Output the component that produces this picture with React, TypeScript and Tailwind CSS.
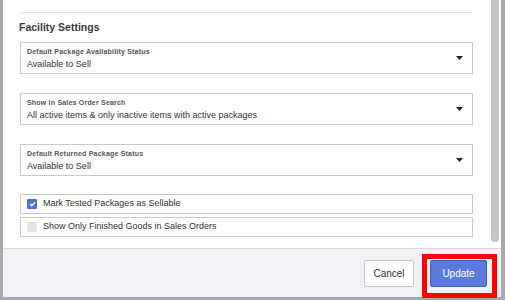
import React from 'react';

const selects = [
  { label: 'Default Package Availability Status', value: 'Available to Sell' },
  { label: 'Show in Sales Order Search', value: 'All active items & only inactive items with active packages' },
  { label: 'Default Returned Package Status', value: 'Available to Sell' },
];

function Caret() {
  return (
    <svg width="7" height="4" viewBox="0 0 7 4" className="shrink-0">
      <path d="M0 0 H7 L3.5 4 Z" fill="#222" />
    </svg>
  );
}

function SelectBox({ label, value }: { label: string; value: string }) {
  return (
    <div className="flex h-[32px] items-center border border-[#c9c9cc] bg-white pl-[6px] pr-[9px]">
      <div className="flex flex-1 flex-col">
        <span className="text-[7px] font-bold leading-[9px] tracking-[0.2px] text-[#555]">{label}</span>
        <span className="mt-[3px] text-[9px] leading-[11px] text-[#333]">{value}</span>
      </div>
      <Caret />
    </div>
  );
}

function CheckRow({ label, checked }: { label: string; checked: boolean }) {
  return (
    <div className="flex h-[20px] items-center border border-[#c9c9cc] bg-white pl-[6px]">
      {checked ? (
        <span className="flex h-[10px] w-[10px] items-center justify-center rounded-[1px] bg-[#4d6fd6]">
          <svg width="7" height="6" viewBox="0 0 7 6">
            <path d="M1 3 L2.8 4.8 L6 1.2" stroke="#fff" strokeWidth="1.3" fill="none" />
          </svg>
        </span>
      ) : (
        <span className="h-[10px] w-[10px] rounded-[1px] bg-[#e2e3ea]" />
      )}
      <span className="ml-[6px] text-[9px] text-[#333]">{label}</span>
    </div>
  );
}

export default function App() {
  return (
    <div
      className="flex h-[300px] w-[505px] overflow-hidden bg-[#a7a8ac]"
      style={{ fontFamily: '"Liberation Sans", Arial, sans-serif' }}
    >
      <div className="ml-[3px] flex h-[297px] w-[498px] flex-col bg-white">
        <div className="flex h-[248px]">
          <div className="flex flex-1 flex-col pl-[16px] pr-[18px]">
            <div className="mt-[12px] border-t border-[#e3e3e6]" />
            <h2 className="mt-[7px] text-[10.5px] font-semibold leading-[14px] text-[#3a3a3a]">Facility Settings</h2>
            <div className="ml-[1px] mt-[8px] flex flex-col">
              <SelectBox {...selects[0]} />
              <div className="mt-[19px]">
                <SelectBox {...selects[1]} />
              </div>
              <div className="mt-[19px]">
                <SelectBox {...selects[2]} />
              </div>
              <div className="mt-[18px] flex flex-col gap-[3px]">
                <CheckRow label="Mark Tested Packages as Sellable" checked />
                <CheckRow label="Show Only Finished Goods in Sales Orders" checked={false} />
              </div>
            </div>
          </div>
          <div className="flex w-[10px] justify-start">
            <div className="h-[242px] w-[8px] rounded-b-[4px] bg-[#c4c4c4]" />
          </div>
        </div>
        <div className="flex flex-1 items-center justify-end gap-[16px] border-t border-[#dadade] bg-[#f1f2f6] pr-[14px]">
          <button className="h-[27px] w-[50px] rounded-[2px] border border-[#c6c6ca] bg-white text-[10px] text-[#333]">
            Cancel
          </button>
          <div className="relative">
            <button className="h-[27px] w-[57px] rounded-[2px] border border-[#3f5fc4] bg-[#5a7ade] text-[10px] text-white">
              Update
            </button>
            <div className="pointer-events-none absolute -bottom-[11px] -left-[8px] -right-[10px] -top-[6px] border-[5px] border-[#ff0000]" />
          </div>
        </div>
      </div>
    </div>
  );
}
